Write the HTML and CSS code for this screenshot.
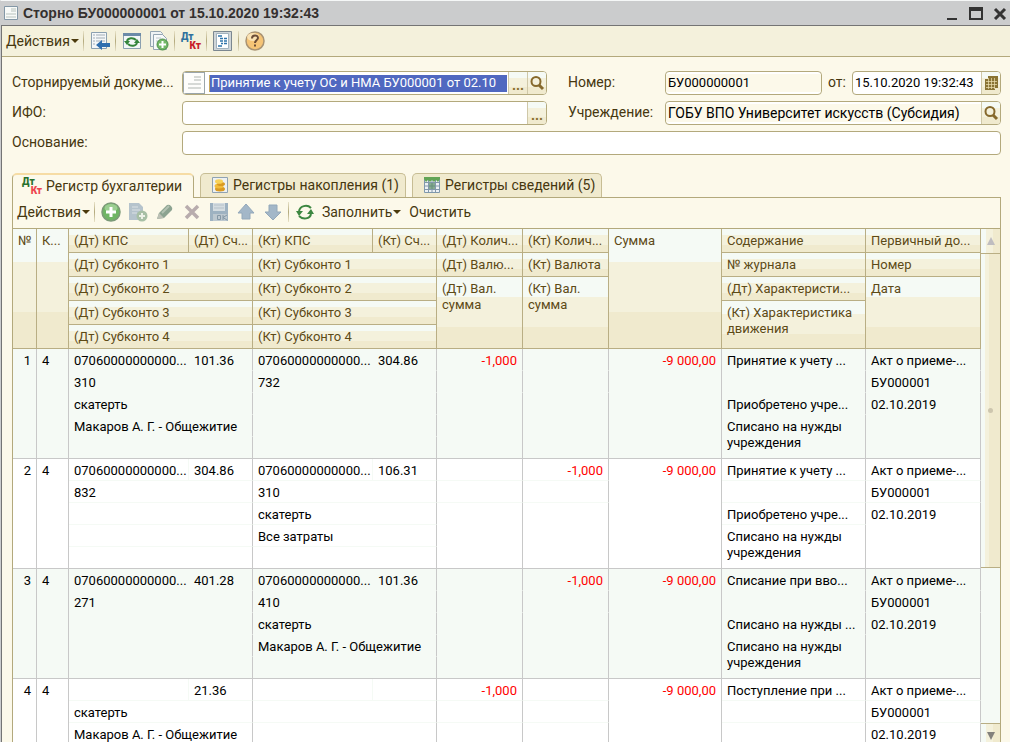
FILE: index.html
```html
<!DOCTYPE html>
<html lang="ru">
<head>
<meta charset="utf-8">
<title>Сторно</title>
<link rel="stylesheet" href="styles.css">
</head>
<body>
<div class="window">
  <header class="titlebar">
    <svg class="doc-icon" viewBox="0 0 14 14"><path d="M.5.5h13v13H.5z" fill="#f8faf8" stroke="#8397a6"/><path d="M7 3h5M7 5h5M2 8h10M2 11h10" stroke="#b8c2bd"/></svg>
    <h1 class="title">Сторно БУ000000001 от 15.10.2020 19:32:43</h1>
    <div class="window-buttons">
      <button class="win-btn" aria-label="Свернуть"><svg viewBox="0 0 14 14"><path d="M2 13h10" stroke="#333" stroke-width="2"/></svg></button>
      <button class="win-btn" aria-label="Развернуть"><svg viewBox="0 0 14 14"><path d="M1 2h12v11H1z" fill="none" stroke="#333" stroke-width="2"/><path d="M0 3h14" stroke="#333" stroke-width="4"/></svg></button>
      <button class="win-btn" aria-label="Закрыть"><svg viewBox="0 0 14 14"><path d="M2 3l10 10M12 3L2 13" stroke="#333" stroke-width="3"/></svg></button>
    </div>
  </header>
  <div class="client">
    <div class="toolbar main-toolbar">
      <button class="menu-btn">Действия<span class="caret"></span></button>
      <span class="sep"></span>
      <button class="icon-btn" aria-label="Перейти"><svg viewBox="0 0 20 20"><path d="M1.500 1.500h15v16h-15z" fill="#f4f7f8" stroke="#8ba0b0"/><path d="M3 4h2m1 0h9M3 7h2m1 0h9M3 10h2m1 0h9M3 13h2" stroke="#a2adb6"/><path d="M6 14l6-5v3h8v4h-8v3z" fill="#2f6fae"/></svg></button>
      <span class="sep"></span>
      <button class="icon-btn" aria-label="Перечитать"><svg viewBox="0 0 20 20"><path d="M1.500 2.500h17v15h-17z" fill="#f3f7f7" stroke="#8ba0b0"/><path d="M1 2h18v3H1z" fill="#6c8ba8"/><path d="M5 10c1-3 6-4 9-1M15 12c-1 3-6 4-9 1" fill="none" stroke="#34853b" stroke-width="2"/><path d="M2 10h6l-3 4zM12 12h6l-3-4z" fill="#34853b"/></svg></button>
      <button class="icon-btn" aria-label="Скопировать"><svg viewBox="0 0 20 20"><path d="M1.500.500h10l2 2v13h-12z" fill="#eef2f4" stroke="#94a5b2"/><path d="M4.500 3.500h9l4 4v11h-13z" fill="#f7f9fa" stroke="#94a5b2"/><path d="M7 7h5M7 10h3" stroke="#bcc6cc"/><circle cx="13.500" cy="13.500" r="5.500" fill="#74b867" stroke="#4b8d48"/><path d="M13.500 10v7M10 13.500h7" stroke="#fff" stroke-width="2"/></svg></button>
      <span class="sep"></span>
      <button class="icon-btn" aria-label="Проводки"><span class="dtkt blue"><b>Дт</b><b>Кт</b></span></button>
      <span class="sep"></span>
      <button class="icon-btn" aria-label="Структура"><svg viewBox="0 0 20 20"><path d="M.5.500h18v19h-18z" fill="#cfd5d8" stroke="#7b8790"/><path d="M3.500 2.500h12v15h-12z" fill="#fff" stroke="#a3b3be"/><path d="M5 5h4M7 7.500h3m1 0h3M7 10h3m1 0h3M8 12.500h2m1 0h3M5 15h4" stroke="#2f74ab" stroke-width="1.500"/></svg></button>
      <span class="sep"></span>
      <button class="icon-btn" aria-label="Справка"><svg viewBox="0 0 20 20"><circle cx="10" cy="10" r="9" fill="#f5c476" stroke="#a99372" stroke-width="1.500"/><ellipse cx="8" cy="6" rx="6" ry="4" fill="#fae2b2"/><path d="M7 7.500c0-4 6-4 6-.5 0 2-3 2-3 5" fill="none" stroke="#6b4c36" stroke-width="2"/><path d="M9 13.500h2v2H9z" fill="#6b4c36"/></svg></button>
    </div>

    <form class="form">
      <label class="label" for="doc">Сторнируемый докуме...</label>
      <div class="field">
        <span class="type-box"><svg class="type-icon" viewBox="0 0 18 20"><path d="M9 4h7M9 7h7M3 11h13M3 15h13" stroke="#c9cdca" stroke-width="1.500"/></svg></span>
        <input id="doc" class="selected" value="Принятие к учету ОС и НМА БУ000001 от 02.10">
        <button type="button" class="field-btn" aria-label="Выбрать"><span class="dots">...</span></button>
        <button type="button" class="field-btn" aria-label="Открыть"><svg viewBox="0 0 16 16"><circle cx="7" cy="6.500" r="4.500" fill="none" stroke="#86692c" stroke-width="2"/><path d="M10 10l4 4" stroke="#86692c" stroke-width="3"/></svg></button>
      </div>
      <label class="label second" for="num">Номер:</label>
      <div class="pair">
        <div class="field readonly num"><input id="num" class="digits" value="БУ000000001" readonly></div>
        <label class="label" for="date">от:</label>
        <div class="field date"><input id="date" class="digits" value="15.10.2020 19:32:43">
          <button type="button" class="field-btn" aria-label="Календарь"><svg viewBox="0 0 16 16"><path d="M5 1h10v12H5z" fill="#8a7434"/><path d="M2 4h10v11H2z" fill="#8a7434"/><path d="M5.500 3v11M8.500 3v11M11.500 3v11M3 6.500h11M3 9.500h11M3 12.500h9" stroke="#eee2b5" stroke-width=".7"/></svg></button></div>
      </div>
      <label class="label" for="ifo">ИФО:</label>
      <div class="field"><input id="ifo"><button type="button" class="field-btn" aria-label="Выбрать"><span class="dots">...</span></button></div>
      <label class="label second" for="org">Учреждение:</label>
      <div class="field readonly"><input id="org" value="ГОБУ ВПО Университет искусств (Субсидия)" readonly>
        <button type="button" class="field-btn" aria-label="Открыть"><svg viewBox="0 0 16 16"><circle cx="7" cy="6.500" r="4.500" fill="none" stroke="#86692c" stroke-width="2"/><path d="M10 10l4 4" stroke="#86692c" stroke-width="3"/></svg></button></div>
      <label class="label" for="base">Основание:</label>
      <div class="field wide"><input id="base"></div>
    </form>

    <div class="tabs" role="tablist">
      <button class="tab active" role="tab" aria-selected="true"><span class="dtkt green"><b>Дт</b><b>Кт</b></span>Регистр бухгалтерии</button>
      <button class="tab" role="tab"><svg viewBox="0 0 18 18"><path d="M1.500 1.500h15v15h-15z" fill="#edf1f2" stroke="#8fa2b2"/><ellipse cx="9" cy="13" rx="5" ry="2.500" fill="#d99a22"/><ellipse cx="8" cy="10" rx="4.500" ry="2.500" fill="#f2bd3a"/><ellipse cx="10" cy="8" rx="4" ry="2" fill="#d99a22"/><ellipse cx="8" cy="5.500" rx="4" ry="2.300" fill="#f8d257"/></svg>Регистры накопления (1)</button>
      <button class="tab" role="tab"><svg viewBox="0 0 18 18"><path d="M1.500 1.500h15v15h-15z" fill="#edf1f4" stroke="#7f98ac"/><path d="M2 6.500h14M2 10h14M2 13.500h14M5.500 2v14M9 2v14M12.500 2v14" stroke="#8298aa"/><path d="M1 1h16v2l-2 3-2-2-2 2-2-2-2 2-2-2-2 2-2-3z" fill="#62a455"/><path d="M6 7h6v6H6z" fill="#5a8c66" opacity=".7"/></svg>Регистры сведений (5)</button>
    </div>

    <section class="panel">
      <div class="toolbar list-toolbar">
        <button class="menu-btn">Действия<span class="caret"></span></button>
        <span class="sep"></span>
        <button class="icon-btn" aria-label="Добавить"><svg viewBox="0 0 20 20"><circle cx="10" cy="10" r="9" fill="#70b565" stroke="#7c9a78" stroke-width="1.500"/><ellipse cx="10" cy="6" rx="6.500" ry="4" fill="#9bce91"/><path d="M10 5v10M5 10h10" stroke="#fff" stroke-width="3"/></svg></button>
        <button class="icon-btn" aria-label="Копировать" disabled><svg viewBox="0 0 20 20"><path d="M1 1h10l4 4v13H1z" fill="#b5c3cc"/><path d="M4 5h6M4 8h8M4 11h5" stroke="#dbe1e4"/><circle cx="14" cy="14" r="5.500" fill="#a7bfa5"/><path d="M14 11v6M11 14h6" stroke="#edf1e8" stroke-width="2"/></svg></button>
        <button class="icon-btn" aria-label="Изменить" disabled><svg viewBox="0 0 20 20"><path d="M2 17l2-6 8-8q2-1 4 1t1 4l-8 8z" fill="#8ca391"/><path d="M2 17l2-6 5 5z" fill="#bcc0b5"/><path d="M7 11l7-7" stroke="#b3c2b3" stroke-width="2"/></svg></button>
        <button class="icon-btn" aria-label="Удалить" disabled><svg viewBox="0 0 20 20"><path d="M4 4l12 12M16 4L4 16" stroke="#b8acad" stroke-width="3.500"/></svg></button>
        <button class="icon-btn" aria-label="Закончить" disabled><svg viewBox="0 0 20 20"><path d="M1 1h18v18H1z" fill="#9eb2c1"/><path d="M4 1h12v8H4z" fill="#d5dde1"/><path d="M5 3h10M5 6h10" stroke="#b5c1c9"/><path d="M4 12h14v7H4z" fill="#bdc8cf"/><path d="M8.500 13.500h3v4h-3zM14 13v5m4-5l-4 2.500 4 2.500" fill="none" stroke="#8598a6"/></svg></button>
        <button class="icon-btn" aria-label="Вверх" disabled><svg viewBox="0 0 20 20"><path d="M10 2l8 9h-4v6H6v-6H2z" fill="#a3b7c8" stroke="#93a8ba"/></svg></button>
        <button class="icon-btn" aria-label="Вниз" disabled><svg viewBox="0 0 20 20"><path d="M10 18l8-8h-4V3H6v7H2z" fill="#a3b7c8" stroke="#93a8ba"/></svg></button>
        <span class="sep"></span>
        <button class="icon-btn" aria-label="Обновить"><svg viewBox="0 0 20 20"><path d="M4 9c1-5 8-7 12-3M16 12c-1 5-8 6-12 2" fill="none" stroke="#3d8741" stroke-width="2"/><path d="M1 9h7l-4 5zM12 12h7l-3-5z" fill="#3d8741"/></svg></button>
        <button class="menu-btn">Заполнить<span class="caret"></span></button>
        <button class="menu-btn">Очистить</button>
      </div>
      <div class="list">
        <div class="table-wrap">
        <table class="grid">
          <colgroup><col class="c-n"><col class="c-k"><col class="c-kps"><col class="c-acc"><col class="c-kps"><col class="c-acc"><col class="c-qty"><col class="c-qty"><col class="c-sum"><col class="c-text"><col class="c-doc"></colgroup>
          <thead>
            <tr><th rowspan="5">№</th><th rowspan="5">К...</th><th>(Дт) КПС</th><th>(Дт) Сч...</th><th>(Кт) КПС</th><th>(Кт) Сч...</th><th>(Дт) Колич...</th><th>(Кт) Колич...</th><th rowspan="5">Сумма</th><th>Содержание</th><th>Первичный до...</th></tr>
            <tr><th colspan="2">(Дт) Субконто 1</th><th colspan="2">(Кт) Субконто 1</th><th>(Дт) Валю...</th><th>(Кт) Валюта</th><th>№ журнала</th><th>Номер</th></tr>
            <tr><th colspan="2">(Дт) Субконто 2</th><th colspan="2">(Кт) Субконто 2</th><th rowspan="3" class="wrap">(Дт) Вал. сумма</th><th rowspan="3" class="wrap">(Кт) Вал. сумма</th><th>(Дт) Характеристи...</th><th rowspan="3">Дата</th></tr>
            <tr><th colspan="2">(Дт) Субконто 3</th><th colspan="2">(Кт) Субконто 3</th><th rowspan="2" class="wrap">(Кт) Характеристика движения</th></tr>
            <tr><th colspan="2">(Дт) Субконто 4</th><th colspan="2">(Кт) Субконто 4</th></tr>
          </thead>
          <tbody class="odd">
            <tr><td rowspan="5" class="num-cell">1</td><td rowspan="5">4</td><td class="open">07060000000000...</td><td>101.36</td><td class="open">07060000000000...</td><td>304.86</td><td class="amount">-1,000</td><td></td><td rowspan="5" class="amount">-9 000,00</td><td>Принятие к учету ...</td><td>Акт о приеме-...</td></tr>
            <tr><td colspan="2">310</td><td colspan="2">732</td><td></td><td></td><td></td><td>БУ000001</td></tr>
            <tr><td colspan="2">скатерть</td><td colspan="2"></td><td rowspan="3"></td><td rowspan="3"></td><td>Приобретено учре...</td><td rowspan="3">02.10.2019</td></tr>
            <tr><td colspan="2">Макаров А. Г. - Общежитие</td><td colspan="2"></td><td rowspan="2" class="wrap">Списано на нужды учреждения</td></tr>
            <tr><td colspan="2"></td><td colspan="2"></td></tr>
          </tbody>
          <tbody>
            <tr><td rowspan="5" class="num-cell">2</td><td rowspan="5">4</td><td class="open">07060000000000...</td><td>304.86</td><td class="open">07060000000000...</td><td>106.31</td><td></td><td class="amount">-1,000</td><td rowspan="5" class="amount">-9 000,00</td><td>Принятие к учету ...</td><td>Акт о приеме-...</td></tr>
            <tr><td colspan="2">832</td><td colspan="2">310</td><td></td><td></td><td></td><td>БУ000001</td></tr>
            <tr><td colspan="2"></td><td colspan="2">скатерть</td><td rowspan="3"></td><td rowspan="3"></td><td>Приобретено учре...</td><td rowspan="3">02.10.2019</td></tr>
            <tr><td colspan="2"></td><td colspan="2">Все затраты</td><td rowspan="2" class="wrap">Списано на нужды учреждения</td></tr>
            <tr><td colspan="2"></td><td colspan="2"></td></tr>
          </tbody>
          <tbody class="odd">
            <tr><td rowspan="5" class="num-cell">3</td><td rowspan="5">4</td><td class="open">07060000000000...</td><td>401.28</td><td class="open">07060000000000...</td><td>101.36</td><td></td><td class="amount">-1,000</td><td rowspan="5" class="amount">-9 000,00</td><td>Списание при вво...</td><td>Акт о приеме-...</td></tr>
            <tr><td colspan="2">271</td><td colspan="2">410</td><td></td><td></td><td></td><td>БУ000001</td></tr>
            <tr><td colspan="2"></td><td colspan="2">скатерть</td><td rowspan="3"></td><td rowspan="3"></td><td>Списано на нужды ...</td><td rowspan="3">02.10.2019</td></tr>
            <tr><td colspan="2"></td><td colspan="2">Макаров А. Г. - Общежитие</td><td rowspan="2" class="wrap">Списано на нужды учреждения</td></tr>
            <tr><td colspan="2"></td><td colspan="2"></td></tr>
          </tbody>
          <tbody>
            <tr><td rowspan="3" class="num-cell">4</td><td rowspan="3">4</td><td class="open"></td><td>21.36</td><td class="open"></td><td></td><td class="amount">-1,000</td><td></td><td rowspan="3" class="amount">-9 000,00</td><td>Поступление при ...</td><td>Акт о приеме-...</td></tr>
            <tr><td colspan="2">скатерть</td><td colspan="2"></td><td></td><td></td><td></td><td>БУ000001</td></tr>
            <tr><td colspan="2">Макаров А. Г. - Общежитие</td><td colspan="2"></td><td></td><td></td><td></td><td>02.10.2019</td></tr>
          </tbody>
        </table>
        </div>
        <div class="scrollbar">
          <button class="scroll-btn" aria-label="Прокрутить вверх" disabled><span class="arrow up"></span></button>
          <div class="track"><div class="thumb"><span class="grip"></span></div></div>
          <button class="scroll-btn down-btn" aria-label="Прокрутить вниз"><span class="arrow down"></span></button>
        </div>
      </div>
    </section>
  </div>
</div>
</body>
</html>
```
FILE: styles.css
```css
* { box-sizing: border-box; }
body {
  margin: 0;
  font: 13px/16px Roboto, "Liberation Sans", sans-serif;
  color: #46370f;
  background: #fcf9ea;
}
button, input { font: inherit; color: inherit; margin: 0; padding: 0; border: 0; background: none; }
svg { display: block; }

.window { height: 100vh; display: flex; flex-direction: column; overflow: hidden; border-top: 1px solid #f5f7f7; border-left: 1px solid #cbcccd; }
.titlebar { display: flex; align-items: center; height: 25px; flex: none; padding: 0 3px; background: #cbcccd; border-bottom: 1px solid #747474; }
.doc-icon { width: 14px; height: 14px; }
.title { flex: 1; margin: 0 0 0 5px; font: bold 14px/18px "Liberation Sans", Arial, sans-serif; color: #34302f; }
.window-buttons { display: flex; gap: 10px; }
.win-btn { width: 14px; height: 14px; }
.win-btn svg { width: 14px; height: 14px; }

.client { flex: 1; min-height: 0; display: flex; flex-direction: column; border-left: 1px solid #747474; }
.toolbar { display: flex; align-items: center; flex: none; }
.main-toolbar { height: 31px; padding: 0 0 1px 4px; background: #f4f1dc; border-bottom: 1px solid #b3a97c; }
.menu-btn { display: flex; align-items: center; gap: 1px; white-space: nowrap; font-size: 14px; }
.caret { border: 4px solid transparent; border-top-color: #4b3a0c; border-bottom: 0; }
.sep { width: 1px; height: 20px; margin: 0 6px 0 4px; background: linear-gradient(#e8e2c8, #b3a97c, #e8e2c8); }
.icon-btn { width: 20px; height: 20px; margin-right: 1px; flex: none; }
.icon-btn + .icon-btn { margin-left: 6px; }
.icon-btn svg { width: 20px; height: 20px; }

.dtkt { display: flex; flex-direction: column; width: 20px; font: bold 10px/9px Roboto, sans-serif; }
.dtkt b { text-align: left; }
.dtkt b + b { text-align: right; color: #c8202a; }
.blue { color: #2f719e; }
.green { color: #28712c; }
.green b + b { color: #ee4650; }

.form {
  flex: none;
  display: grid;
  grid-template-columns: 170px minmax(0, 365fr) 118px minmax(0, 336fr);
  gap: 6px 0;
  padding: 14px 9px 18px 10px;
  font-size: 14px;
}
.label { align-self: center; padding-bottom: 2px; white-space: nowrap; }
.second { padding-left: 21px; }
.wide { grid-column: 2 / -1; }
.pair { display: flex; align-items: center; gap: 6px; }
.num { flex: 158; }
.date { flex: 150; }
.field { display: flex; align-items: center; height: 24px; min-width: 0; overflow: hidden; background: #fff; border: 1px solid #b3a97c; border-radius: 4px; }
.field input { flex: 1; min-width: 0; width: 0; height: 18px; padding: 0 0 1px 2px; color: #000; outline: none; }
.field .digits { font-size: 13px; }
.readonly input { background: #fcf9ea; }
.field .selected { height: 17px; margin: 0 1px 0 4px; padding-left: 1px; font-size: 13px; background: #5068c0; color: #fff; border-left: 1px solid #c9a95c; }
.type-box { width: 22px; height: 22px; display: flex; justify-content: center; border: 1px solid #9aa5aa; background: #fdfdfb; }
.type-icon { width: 18px; height: 20px; }
.field-btn { width: 19px; height: 22px; flex: none; display: flex; align-items: center; justify-content: center; border-left: 1px solid #cfc8a8; background: linear-gradient(#f5faf5 0 26%, #f4f1dc 26% 70%, #f0eace 70%); color: #86692c; font-weight: bold; }
.field-btn svg { width: 16px; height: 16px; }
.dots { padding-top: 3px; }

.tabs { flex: none; display: flex; gap: 6px; padding-left: 10px; height: 24px; font-size: 14px; }
.tab { display: flex; align-items: center; gap: 4px; padding: 0 6px 1px 10px; height: 24px; white-space: nowrap; background: #f0eace; border: 1px solid #c7bd94; border-bottom: 0; border-radius: 5px 5px 0 0; }
.tab svg { width: 18px; height: 18px; }
.tab.active { height: 25px; z-index: 1; padding: 0 11px 2px 9px; background: #fcf9ea; border-top: 2px solid #f6dca4; border-left-color: #b3a97c; border-right-color: #b3a97c; }

.panel { flex: 1; min-height: 0; display: flex; flex-direction: column; margin: 0 9px 0 10px; border: 1px solid #b3a97c; border-bottom: 0; }
.list-toolbar { height: 30px; padding: 0 0 2px 4px; }
.list-toolbar .menu-btn + .menu-btn { margin-left: 8px; }
.list-toolbar .icon-btn + .menu-btn { margin-left: 6px; }
.list { flex: 1; min-height: 0; display: flex; border-top: 1px solid #b3a97c; }
.table-wrap { flex: 1; min-width: 0; overflow: hidden; }

.grid { width: 100%; table-layout: fixed; border-collapse: separate; border-spacing: 0; }
.c-n { width: 24px; } .c-k { width: 32px; } .c-kps { width: 120px; } .c-acc { width: 64px; }
.c-qty { width: 86px; } .c-sum { width: 113px; } .c-text { width: 144px; } .c-doc { width: 115px; }
.grid th, .grid td { padding: 4px 0 0 5px; text-align: left; vertical-align: top; font-weight: normal; white-space: nowrap; overflow: hidden; }
.grid th { height: 24px; color: #5d4a16; background: linear-gradient(#f5faf5 0 28%, #f4f1dc 28% 70%, #f0eace 70%); border-right: 1px solid #b9ae84; border-bottom: 1px solid #b9ae84; }
.grid td { height: 22px; color: #000; border-right: 1px solid #c8c8c8; border-bottom: 1px solid #f5faf5; }
.grid .wrap { white-space: normal; }
.grid tbody { background: #fff; }
.grid tbody.odd { background: #f5faf5; }
.grid tbody tr:last-child td, .grid tbody td[rowspan] { border-bottom-color: #c8c8c8; }
.grid td.open { border-right-color: #f5faf5; }
.grid td.num-cell { padding: 4px 5px 0 0; text-align: right; }
.grid td.amount { padding: 4px 5px 0 0; text-align: right; color: #f00; }

.scrollbar { width: 19px; flex: none; display: flex; flex-direction: column; background: #f5faf5; }
.scroll-btn { height: 25px; flex: none; display: flex; align-items: center; justify-content: center; background: linear-gradient(90deg, #f5faf5 0 25%, #f4f1dc 25% 65%, #f0eace 65%); border-bottom: 1px solid #b9ae84; }
.down-btn { height: 19px; border-top: 1px solid #b9ae84; border-bottom: 0; padding-top: 6px; }
.track { flex: 1; }
.thumb { height: 67%; display: flex; align-items: center; justify-content: center; background: linear-gradient(90deg, #f5faf5 0 20%, #f4f1dc 20% 40%, #f0eace 40%); border-bottom: 1px solid #b9ae84; }
.grip { width: 5px; height: 5px; border-radius: 50%; background: #cdc6ae; }
.arrow { border: 4px solid transparent; }
.up { border-top: 0; border-bottom: 8px solid #bfbdc0; }
.down { border-bottom: 0; border-top: 8px solid #82807c; }
```
